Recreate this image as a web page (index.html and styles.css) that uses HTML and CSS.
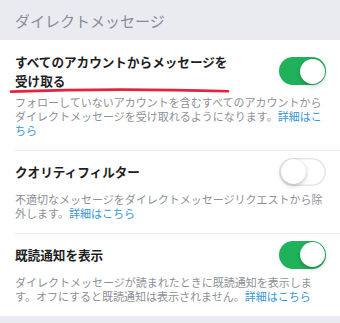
FILE: index.html
```html
<!DOCTYPE html>
<html lang="ja">
<head>
<meta charset="utf-8">
<link rel="stylesheet" href="styles.css">
</head>
<body>
<div class="page">
  <div class="section-head">ダイレクトメッセージ</div>
  <div class="list">
    <div class="row row-first">
      <div class="row-main">
        <div class="title">すべてのアカウントからメッセージを<br>受け取る</div>
        <span class="toggle on"><span class="knob"></span></span>
      </div>
      <div class="desc">フォローしていないアカウントを含むすべてのアカウントから<br>ダイレクトメッセージを受け取れるようになります。<span class="link">詳細はこ<br>ちら</span></div>
      <svg class="mark" width="240" height="8" viewBox="0 0 240 8"><path d="M11 4.6 C 70 2.4, 160 2.2, 228 4.2" fill="none" stroke="#e8213d" stroke-width="2.6" stroke-linecap="round"/></svg>
    </div>
    <div class="row">
      <div class="row-main">
        <div class="title">クオリティフィルター</div>
        <span class="toggle"><span class="knob"></span></span>
      </div>
      <div class="desc">不適切なメッセージをダイレクトメッセージリクエストから除<br>外します。<span class="link">詳細はこちら</span></div>
    </div>
    <div class="row">
      <div class="row-main">
        <div class="title">既読通知を表示</div>
        <span class="toggle on"><span class="knob"></span></span>
      </div>
      <div class="desc">ダイレクトメッセージが読まれたときに既読通知を表示しま<br>す。オフにすると既読通知は表示されません。<span class="link">詳細はこちら</span></div>
    </div>
  </div>
  <div class="section-foot"></div>
</div>
</body>
</html>
```

FILE: styles.css
```css
* { box-sizing: border-box; }
html, body { margin: 0; padding: 0; }
body {
  width: 340px;
  height: 323px;
  overflow: hidden;
  background: #ffffff;
  font-family: "Noto Sans CJK JP", "Noto Sans", sans-serif;
}
.page { display: flex; flex-direction: column; }
.section-head {
  height: 40px;
  background: #e9ebf1;
  color: #878b95;
  font-size: 15px;
  line-height: 40px;
  padding: 1px 0 0 15px;
}
.list { background: #fff; }
.row {
  position: relative;
  margin-left: 15px;
  padding: 5px 14px 13px 0;
  border-top: 1px solid #ececee;
}
.row-first { border-top: none; padding-top: 12px; }
.row-main {
  display: flex;
  align-items: center;
  justify-content: space-between;
  min-height: 31px;
}
.title {
  font-size: 12.6px;
  font-weight: 700;
  color: #1e1e1e;
  line-height: 19px;
}
.desc {
  margin-top: 5px;
  font-size: 11px;
  line-height: 14px;
  color: #8d9096;
  white-space: nowrap;
}
.link { color: #3a96d6; }
.toggle {
  position: relative;
  flex: none;
  width: 47px;
  height: 28px;
  border-radius: 14px;
  background: #fff;
  box-shadow: inset 0 0 0 1.5px #e6e6e8;
}
.toggle.on { background: #1fb25a; box-shadow: none; }
.knob {
  position: absolute;
  top: 1.5px;
  left: 1.5px;
  width: 25px;
  height: 25px;
  border-radius: 50%;
  background: #fff;
  box-shadow: 0 2px 4px rgba(0,0,0,0.22), 0 0 1px rgba(0,0,0,0.15);
}
.toggle.on .knob { left: 20.5px; }
.mark {
  position: absolute;
  left: -15px;
  top: 47px;
}
.section-foot {
  height: 12px;
  background: #e9ebf1;
}
```
